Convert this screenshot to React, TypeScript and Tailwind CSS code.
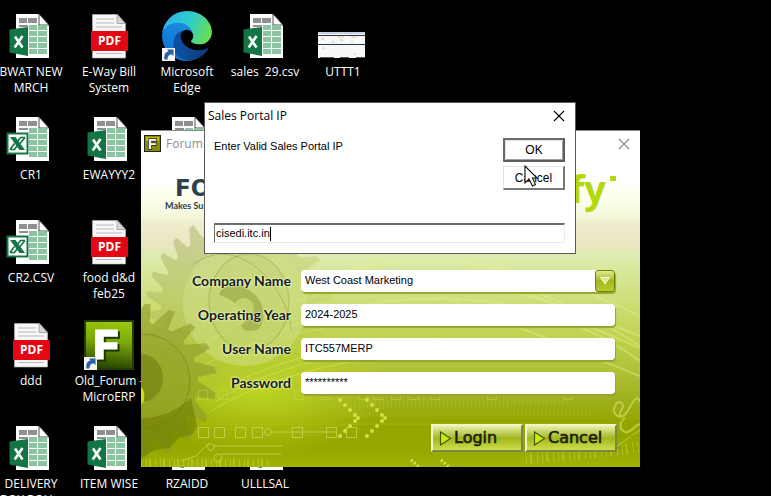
import React from "react";

const UI = "font-['Open_Sans','Noto_Sans',sans-serif]";
const ARIAL = "font-['Liberation_Sans',Arial,sans-serif]";

function Shortcut() {
  return (
    <g>
      <rect x="0" y="37" width="13" height="13" fill="#f4f4f4" />
      <path d="M2.500 48.500c-.8-5 1-7.500 4-8l-1.500-2h6.500v6.500l-2-1.800c-2.500 .3-4 2-4 5.300z" fill="#2a5fa8" />
    </g>
  );
}

function Sheet() {
  const rows = [14, 20, 26, 32, 38];
  return (
    <g>
      <path d="M10 3h23l10 11v33H10z" fill="#fdfdfd" />
      <path d="M33 3v11h10z" fill="#fff" stroke="#222" strokeWidth="0.8" />
      <path d="M13 7h8v5h-8zM22 7h9v5h-9zM13 14h9v2h-9z" fill="#8f8f8f" />
      {rows.map((y) => (
        <path key={y} d={`M23 ${y}h8v5h-8zM32 ${y}h9v5h-9z`} fill="#8cc3a1" />
      ))}
    </g>
  );
}

function ExcelIcon() {
  return (
    <svg width="50" height="50" viewBox="0 0 50 50" aria-hidden="true">
      <Sheet />
      <path d="M3.500 18.500L22 16v29L3.500 41.500z" fill="#127544" />
      <path d="M9 25.500l7.500 11M16.500 25l-7.800 11.500" stroke="#fff" strokeWidth="2.600" />
    </svg>
  );
}

function CsvIcon() {
  return (
    <svg width="50" height="50" viewBox="0 0 50 50" aria-hidden="true">
      <Sheet />
      <rect x="1.500" y="19.500" width="20" height="20" fill="#fff" stroke="#127544" strokeWidth="2" />
      <path d="M4 23h5.500l9.500 13h-5.500z" fill="#127544" />
      <path d="M19 23.500h-4.500l-4 5M4 35.500h4.500l3.500-5M19 23.500l-5 6M4 35.500l4.500-6" fill="none" stroke="#127544" strokeWidth="1.600" />
    </svg>
  );
}

function PdfIcon() {
  return (
    <svg width="50" height="50" viewBox="0 0 50 50" aria-hidden="true">
      <path d="M8.500 3.500h25l8 9V47h-33z" fill="#f7f7f7" stroke="#bbb" strokeWidth="0.600" />
      <path d="M33 3.500v9h8.500z" fill="#d8d8d8" stroke="#999" strokeWidth="0.800" />
      <path d="M12 8h18M12 12h18M12 16h26M12 42.500h26" stroke="#b5bac0" strokeWidth="1" />
      <rect x="7" y="20" width="37" height="20" rx="1" fill="#e30613" />
      <text x="25.500" y="34" textAnchor="middle" fontSize="12" fontWeight="700" fill="#fff" className={UI}>PDF</text>
    </svg>
  );
}

function EdgeIcon() {
  return (
    <svg width="50" height="50" viewBox="0 0 50 50" aria-hidden="true">
      <defs>
        <linearGradient id="e1" x1="0.2" y1="0.5" x2="1" y2="0.6">
          <stop offset="0" stopColor="#0c4f9e" />
          <stop offset="1" stopColor="#0a3d78" />
        </linearGradient>
        <linearGradient id="e2" x1="0.6" y1="0" x2="0.3" y2="1">
          <stop offset="0" stopColor="#1b8ce0" />
          <stop offset="1" stopColor="#0d6fd0" />
        </linearGradient>
        <linearGradient id="e3" x1="0" y1="0.3" x2="1" y2="0.6">
          <stop offset="0" stopColor="#2fb4ea" />
          <stop offset="0.5" stopColor="#2fcbd0" />
          <stop offset="1" stopColor="#6be04e" />
        </linearGradient>
      </defs>
      <g transform="scale(0.195)">
        <path fill="url(#e2)" d="M105.700 241.400a79.200 79.200 0 0 1-22.700-21.300 80.700 80.700 0 0 1 29.500-120c3.200-1.500 8.500-4.100 15.600-4a32.400 32.400 0 0 1 25.700 13 31.900 31.900 0 0 1 6.300 18.700c0-.2 24.500-79.600-80-79.600-43.900 0-80 41.600-80 78.200a130 130 0 0 0 12.100 56 128 128 0 0 0 156.400 67 75.500 75.500 0 0 1-62.800-8z" />
        <path fill="url(#e1)" d="M231 190.500c-3.400 1.800-6.900 3.400-10.500 4.700a101.700 101.700 0 0 1-35.900 6.500c-47.300 0-88.500-32.500-88.500-74.300a31.500 31.500 0 0 1 16.400-27.300c-42.800 1.800-53.800 46.400-53.800 72.500 0 74 68.100 81.400 82.800 81.400 7.900 0 19.800-2.300 27-4.600l1.300-.4a128.300 128.300 0 0 0 66.600-52.800 4 4 0 0 0-5.400-5.700z" />
        <path fill="url(#e3)" d="M152.300 148.900c-.8 1-3.300 2.500-3.300 5.700 0 2.600 1.700 5.100 4.700 7.200 14.400 10 41.500 8.700 41.600 8.700 10.700 0 21.100-2.900 30.300-8.300A61.400 61.400 0 0 0 256 109.300c.3-22.400-8-37.300-11.300-43.900C223.500 23.900 177.700 0 128 0A128 128 0 0 0 0 126.200c.5-36.500 36.800-66 80-66 3.500 0 23.500.3 42 10.100 16.300 8.600 24.900 18.900 30.800 29.200 6.200 10.700 7.300 24.100 7.300 29.500 0 5.300-2.700 13.300-7.800 19.900z" />
      </g>
      <Shortcut />
    </svg>
  );
}

function SnapIcon() {
  return (
    <svg width="50" height="50" viewBox="0 0 50 50" aria-hidden="true">
      <rect x="0" y="21" width="47" height="26" fill="#f8f8f8" />
      <path d="M0 22h47" stroke="#c8d2e4" strokeWidth="2" />
      <path d="M0 24.500h47M0 33.500h47" stroke="#26375c" strokeWidth="1" />
      <path d="M3 28h3M14 31h2M22 29h3M33 31h2M36 43h2M4 37h2" stroke="#b9bfca" />
      <path d="M2 46.500h14M22 46.500h9M38 46.500h9" stroke="#555" />
      <path d="M20 26h6M33 26h5" stroke="#dccf7c" />
    </svg>
  );
}

function ForumIcon() {
  return (
    <svg width="50" height="50" viewBox="0 0 50 50" aria-hidden="true">
      <defs>
        <linearGradient id="f1" x1="0.8" y1="0" x2="0.7" y2="1">
          <stop offset="0" stopColor="#9cc80c" />
          <stop offset="0.450" stopColor="#7aa80a" />
          <stop offset="1" stopColor="#274700" />
        </linearGradient>
      </defs>
      <rect x="1" y="1" width="48" height="48" fill="url(#f1)" stroke="#243a04" strokeWidth="2" />
      <text x="10" y="38" fontSize="39" fontWeight="700" fill="#fff" stroke="#fff" strokeWidth="3" className={`drop-shadow-[2px_2px_0_#1d3500] ${ARIAL}`}>F</text>
      <Shortcut />
    </svg>
  );
}

const desktop: { label: string; icon: React.ReactNode; place: string }[] = [
  { label: "BWAT NEW MRCH", icon: <ExcelIcon />, place: "col-start-1 row-start-1" },
  { label: "E-Way Bill System", icon: <PdfIcon />, place: "col-start-2 row-start-1" },
  { label: "Microsoft Edge", icon: <EdgeIcon />, place: "col-start-3 row-start-1" },
  { label: "sales  29.csv", icon: <ExcelIcon />, place: "col-start-4 row-start-1" },
  { label: "UTTT1", icon: <SnapIcon />, place: "col-start-5 row-start-1" },
  { label: "CR1", icon: <CsvIcon />, place: "col-start-1 row-start-2" },
  { label: "EWAYYY2", icon: <ExcelIcon />, place: "col-start-2 row-start-2" },
  { label: "", icon: <ExcelIcon />, place: "col-start-3 row-start-2" },
  { label: "CR2.CSV", icon: <CsvIcon />, place: "col-start-1 row-start-3" },
  { label: "food d&d feb25", icon: <PdfIcon />, place: "col-start-2 row-start-3" },
  { label: "ddd", icon: <PdfIcon />, place: "col-start-1 row-start-4" },
  { label: "Old_Forum - MicroERP", icon: <ForumIcon />, place: "col-start-2 row-start-4" },
  { label: "DELIVERY BOY ROU...", icon: <ExcelIcon />, place: "col-start-1 row-start-5" },
  { label: "ITEM WISE", icon: <ExcelIcon />, place: "col-start-2 row-start-5" },
  { label: "RZAIDD", icon: <ExcelIcon />, place: "col-start-3 row-start-5" },
  { label: "ULLLSAL", icon: <ExcelIcon />, place: "col-start-4 row-start-5" },
];

// Saw-like teeth: each one rises slowly and drops back sharply.
function gear(cx: number, cy: number, r: number, depth: number, teeth: number) {
  const pts: string[] = [];
  const step = (Math.PI * 2) / teeth;
  for (let i = 0; i < teeth; i++) {
    const a = i * step;
    [[0, r - depth], [0.45, r - 1], [0.7, r], [0.8, r - depth]].forEach(([f, rad]) => {
      const t = a + f * step;
      pts.push(`${(cx + rad * Math.cos(t)).toFixed(1)},${(cy + rad * Math.sin(t)).toFixed(1)}`);
    });
  }
  return pts.join(" ");
}

const squares = [57, 73, 94, 111, 151, 185, 205];
const upperSquares = [57, 77, 153, 180, 217, 232, 250, 268, 289, 346, 422];
const chevron = [[0, 0], [5, 5], [10, 10], [15, 15], [18, 18], [15, 21], [10, 26], [5, 31], [0, 36]];

function Backdrop() {
  return (
    <svg className="col-start-1 row-start-1 h-full w-full" viewBox="0 0 499 311" preserveAspectRatio="none" aria-hidden="true">
      <defs>
        <linearGradient id="bg" x1="0" y1="0" x2="0" y2="1">
          <stop offset="0" stopColor="#ffffff" />
          <stop offset="0.080" stopColor="#ffffff" />
          <stop offset="0.120" stopColor="#fffff0" />
          <stop offset="0.180" stopColor="#f6fbe0" />
          <stop offset="0.220" stopColor="#edeccc" />
          <stop offset="0.280" stopColor="#ebe6c2" />
          <stop offset="0.330" stopColor="#dcebaa" />
          <stop offset="0.450" stopColor="#d0e07e" />
          <stop offset="0.580" stopColor="#c0d250" />
          <stop offset="0.700" stopColor="#aec032" />
          <stop offset="0.780" stopColor="#9fb11e" />
          <stop offset="0.860" stopColor="#93a600" />
          <stop offset="0.940" stopColor="#94a800" />
          <stop offset="1" stopColor="#9fb406" />
        </linearGradient>
        <radialGradient id="glow">
          <stop offset="0" stopColor="#c4dc1e" stopOpacity="0.800" />
          <stop offset="1" stopColor="#c4dc1e" stopOpacity="0" />
        </radialGradient>
        <linearGradient id="g1" x1="0" y1="0" x2="0.8" y2="1">
          <stop offset="0" stopColor="#a9b076" stopOpacity="0.600" />
          <stop offset="0.500" stopColor="#aab64a" stopOpacity="0.350" />
          <stop offset="1" stopColor="#a8b640" stopOpacity="0" />
        </linearGradient>
      </defs>
      <rect width="499" height="311" fill="url(#bg)" />
      <ellipse cx="120" cy="235" rx="130" ry="65" fill="url(#glow)" />
      <g fill="none" stroke="#e6f08c" opacity="0.400">
        <path d="M60 190C200 100 380 110 499 190M90 200C220 120 390 125 499 205M150 130C260 90 380 100 499 160" strokeWidth="2" />
        <path d="M70 255C120 225 200 200 300 195M75 245C120 215 210 190 300 186M90 228C160 195 220 186 300 182M60 210C120 180 200 165 300 160" />
        <path d="M380 130l119 50M400 150l99 42M300 140l199 80M340 120l159 60" strokeWidth="2" />
      </g>
      <polygon points={gear(98, 150, 93, 15, 28)} fill="url(#g1)" />
      <circle cx="104" cy="148" r="62" fill="#d2e28a" opacity="0.500" />
      <ellipse cx="108" cy="146" rx="40" ry="48" fill="#bccc66" opacity="0.250" stroke="#6f7d23" strokeWidth="1.500" />
      <path d="M50 110c20-16 44-16 66 2 18 15 32 38 34 62" fill="none" stroke="#8f9c48" opacity="0.500" />
      <path d="M78 139c4-14 24-14 38 2 8 9 8 24 2 32-6 2-16 4-18-4 8-4 6-14-2-18-6-6-12-10-20-12z" fill="#8c9838" opacity="0.500" />
      <circle cx="103" cy="152" r="10" fill="#c8d870" opacity="0.800" />
      <polygon points={gear(-2, 225, 78, 19, 19)} fill="#8d9a2a" opacity="0.600" />
      <circle cx="2" cy="225" r="47" fill="#97a428" opacity="0.350" stroke="#4e5a0a" strokeWidth="1" />
      <ellipse cx="0" cy="222" rx="22" ry="24" fill="#6c780c" opacity="0.550" />
      <path d="M0 262c20 0 36-7 50-20l6 28-4 8-14 4-10 10-14 2-14 8z" fill="#6f7d04" opacity="0.600" />
      <path d="M0 231c4 2 4 12 2 16l-2 1z" fill="#c8dc20" />
      <g fill="none" stroke="#cfda5e" strokeWidth="1" opacity="0.700">
        {squares.map((x) => <rect key={x} x={x + 0.5} y="271.500" width="10" height="10" />)}
        {upperSquares.map((x) => <rect key={x} x={x + 0.5} y="234.500" width="9" height="9" opacity="0.600" />)}
        <path d="M40 305l15-5 13-13M72 290h70M130 276h66M80 298h60" />
        <circle cx="70" cy="291" r="3.500" /><circle cx="77" cy="302" r="4" /><circle cx="127" cy="276" r="3.500" />
        <path d="M474 250c2-6 8-4 8 0s-6 8-2 10 8-8 12-14 6-4 7 0M474 250c-4 8 4 12 8 10M484 262c-6 4-6 12 0 14s8-6 15-8" strokeWidth="2" />
        <path d="M476 290l23-16" />
      </g>
      <g stroke="#c6d435" opacity="0.550">
        <path d="M0 307h130" strokeWidth="8" strokeDasharray="1 4 1 2 2 4" />
        <path d="M385 303c40-4 80-7 114-12" fill="none" strokeWidth="11" strokeDasharray="1 3 2 5 1 4" />
        <path d="M190 250h180M200 258h250M230 245h200" strokeWidth="5" strokeDasharray="1 3" opacity="0.500" />
        <path d="M60 268h400" strokeWidth="1" opacity="0.600" />
      </g>
      <path d="M270 304l8 7M300 304l8 7" stroke="#d9e45a" strokeWidth="3" strokeDasharray="2 2" />
      <path d="M290 265h209M320 280h179M290 292h209" stroke="#7f9200" opacity="0.400" />
      <g fill="#d4e04a">
        {chevron.map(([x, y]) => (
          <g key={`${x}-${y}`}>
            <circle cx={199 + x} cy={244 + y} r="2" />
            <circle cx={226 + x} cy={244 + y} r="2" />
          </g>
        ))}
      </g>
      <rect x="469" y="20" width="6" height="5" fill="#b3d80c" />
    </svg>
  );
}

function CloseGlyph() {
  return (
    <svg width="12" height="12" viewBox="0 0 12 12" fill="none" stroke="currentColor" strokeWidth="1.100" aria-hidden="true">
      <path d="M1 1l10 10M11 1L1 11" />
    </svg>
  );
}

const fieldClass = `h-[22px] w-full rounded-[4px] bg-white px-1 pb-[2px] text-[11px] text-black shadow-[1px_2px_1px_#94a62e] outline-none ${ARIAL}`;
const labelClass = "text-right text-[14px] leading-[22px] font-bold text-[#141d1c] [text-shadow:0_0_3px_#f4fbc8,0_0_2px_#f4fbc8] font-['Lato','Open_Sans',sans-serif]";
const actionClass = "flex h-[28px] items-center gap-[2px] border-2 border-t-[#f2f6cd] border-l-[#f2f6cd] border-r-[#7e8644] border-b-[#7e8644] bg-linear-to-b from-[#e9f2a0] via-[#a3b614] to-[#cfdf4c] pl-[6px] text-[16px] text-[#1a2106] [-webkit-text-stroke:0.6px_#1a2106] font-['DejaVu_Sans',sans-serif]";

function ActionButton({ children }: { children: string }) {
  return (
    <button type="button" className={`${actionClass} w-[92px]`}>
      <svg width="13" height="15" viewBox="0 0 13 15" aria-hidden="true">
        <path d="M1.500 1v13l10-6.500z" fill="#c6f000" stroke="#47590a" strokeWidth="1.200" />
      </svg>
      {children}
    </button>
  );
}

function LoginWindow() {
  return (
    <section className="absolute top-[130px] left-[141px] w-[499px] border-t border-[#8a8a8a] bg-white">
      <header className={`flex h-[25px] items-center gap-[5px] pr-[10px] pl-[3px] text-[12px] text-[#8f8f8f] ${UI}`}>
        <svg width="17" height="17" viewBox="0 0 17 17" aria-hidden="true">
          <rect x="0.500" y="0.500" width="16" height="16" fill="#8a8c00" stroke="#222" />
          <rect x="2" y="2" width="13" height="4" fill="#c1c400" />
          <text x="4" y="14" fontSize="14" fontWeight="700" fill="#fff" stroke="#222" strokeWidth="1.500" paintOrder="stroke" className={ARIAL}>F</text>
        </svg>
        <span>Forum</span>
        <button type="button" aria-label="Close" className="ml-auto text-[#8a8a8a]"><CloseGlyph /></button>
      </header>
      <div className="grid">
        <Backdrop />
        <form className="col-start-1 row-start-1" onSubmit={(e) => e.preventDefault()}>
          <div className="flex h-[114px] items-start justify-between pr-[34px] pl-6">
            <div className="pt-[20px] text-[#2e3f4d]">
              <div className="pl-[10px] text-[23px] leading-[24px] font-bold font-['DejaVu_Sans',sans-serif]">FO</div>
              <div className="text-[9px] leading-[12px] font-bold font-['Lato',sans-serif]">Makes Sup</div>
            </div>
            <div className="pt-[8px] text-[38px] leading-[48px] font-bold text-[#b3d80c] font-['Open_Sans',sans-serif]">fy</div>
          </div>
          <div className="grid grid-cols-[150px_1fr] gap-x-[10px] gap-y-3 pr-[25px]">
            <label htmlFor="company" className={labelClass}>Company Name</label>
            <div className="grid">
              <select id="company" className={`${fieldClass} col-start-1 row-start-1 appearance-none`}>
                <option>West Coast Marketing</option>
              </select>
              <span className="pointer-events-none col-start-1 row-start-1 flex h-[22px] w-[20px] items-center justify-center justify-self-end rounded-[3px] border border-[#6f8208] bg-linear-to-b from-[#e1ea84] via-[#a3b61a] to-[#b9cb33]">
                <svg width="10" height="8" viewBox="0 0 10 8" aria-hidden="true">
                  <path d="M0.500 0.500h9L5 7z" fill="#dfe88c" stroke="#f7fbd0" />
                </svg>
              </span>
            </div>
            <label htmlFor="year" className={labelClass}>Operating Year</label>
            <input id="year" defaultValue="2024-2025" className={fieldClass} />
            <label htmlFor="user" className={labelClass}>User Name</label>
            <input id="user" defaultValue="ITC557MERP" className={fieldClass} />
            <label htmlFor="pass" className={labelClass}>Password</label>
            <input id="pass" defaultValue="**********" className={fieldClass} />
          </div>
          <div className="flex justify-end gap-[2px] pt-[30px] pr-[23px] pb-[15px]">
            <ActionButton>Login</ActionButton>
            <ActionButton>Cancel</ActionButton>
          </div>
        </form>
      </div>
    </section>
  );
}

function PortalDialog() {
  return (
    <section role="dialog" aria-labelledby="portal-title" className="absolute top-[102px] left-[204px] w-[372px] border border-[#5a5a5a] bg-white text-black">
      <header className={`flex h-[25px] items-center justify-between pr-[10px] pl-[3px] text-[12px] ${UI}`}>
        <h1 id="portal-title">Sales Portal IP</h1>
        <button type="button" aria-label="Close"><CloseGlyph /></button>
      </header>
      <div className={`flex flex-col gap-[33px] pt-[10px] pr-[10px] pb-[10px] pl-[9px] text-[11px] ${ARIAL}`}>
        <div className="flex items-start justify-between">
          <label htmlFor="ip" className="leading-[16px]">Enter Valid Sales Portal IP</label>
          <div className="flex flex-col gap-1 text-[12px]">
            <button type="button" className="h-[24px] w-[62px] border-2 border-t-[#6b6b6b] border-l-[#6b6b6b] border-r-[#5c5c5c] border-b-[#5c5c5c] bg-white shadow-[inset_1px_1px_0_#e3e3e3,inset_-1px_-1px_0_#a0a0a0]">OK</button>
            <button type="button" className="h-[24px] w-[62px] border-t border-r-2 border-b-2 border-l border-t-[#e3e3e3] border-r-[#7a7a7a] border-b-[#7a7a7a] border-l-[#e3e3e3] bg-white">Cancel</button>
          </div>
        </div>
        <div className="flex h-[20px] items-center border border-t-2 border-[#e9e9e9] border-t-[#6f6f6f] border-l-[#6f6f6f] pl-px">
          <input id="ip" defaultValue="cisedi.itc.in" className="outline-none [field-sizing:content]" />
          <span className="h-[14px] w-px bg-black" />
        </div>
      </div>
    </section>
  );
}

export default function App() {
  return (
    <main className="relative h-screen overflow-hidden bg-black">
      <div className={`-ml-2 grid auto-rows-[103px] grid-cols-[repeat(5,78px)] pt-[11px] text-[12px] leading-[16px] text-white ${UI}`}>
        {desktop.map((item) => (
          <div key={item.place} className={`${item.place} flex flex-col items-center gap-[3px] text-center`}>
            {item.icon}
            <span className="whitespace-pre-wrap">{item.label}</span>
          </div>
        ))}
      </div>
      <LoginWindow />
      <PortalDialog />
      <svg className="absolute top-[165px] left-[524px]" width="15" height="23" viewBox="0 0 15 23" aria-hidden="true">
        <path d="M1 1v17l4-4 3.500 7 3-1.500L8.500 13H13z" fill="#fff" stroke="#111" strokeWidth="1.100" />
      </svg>
    </main>
  );
}
